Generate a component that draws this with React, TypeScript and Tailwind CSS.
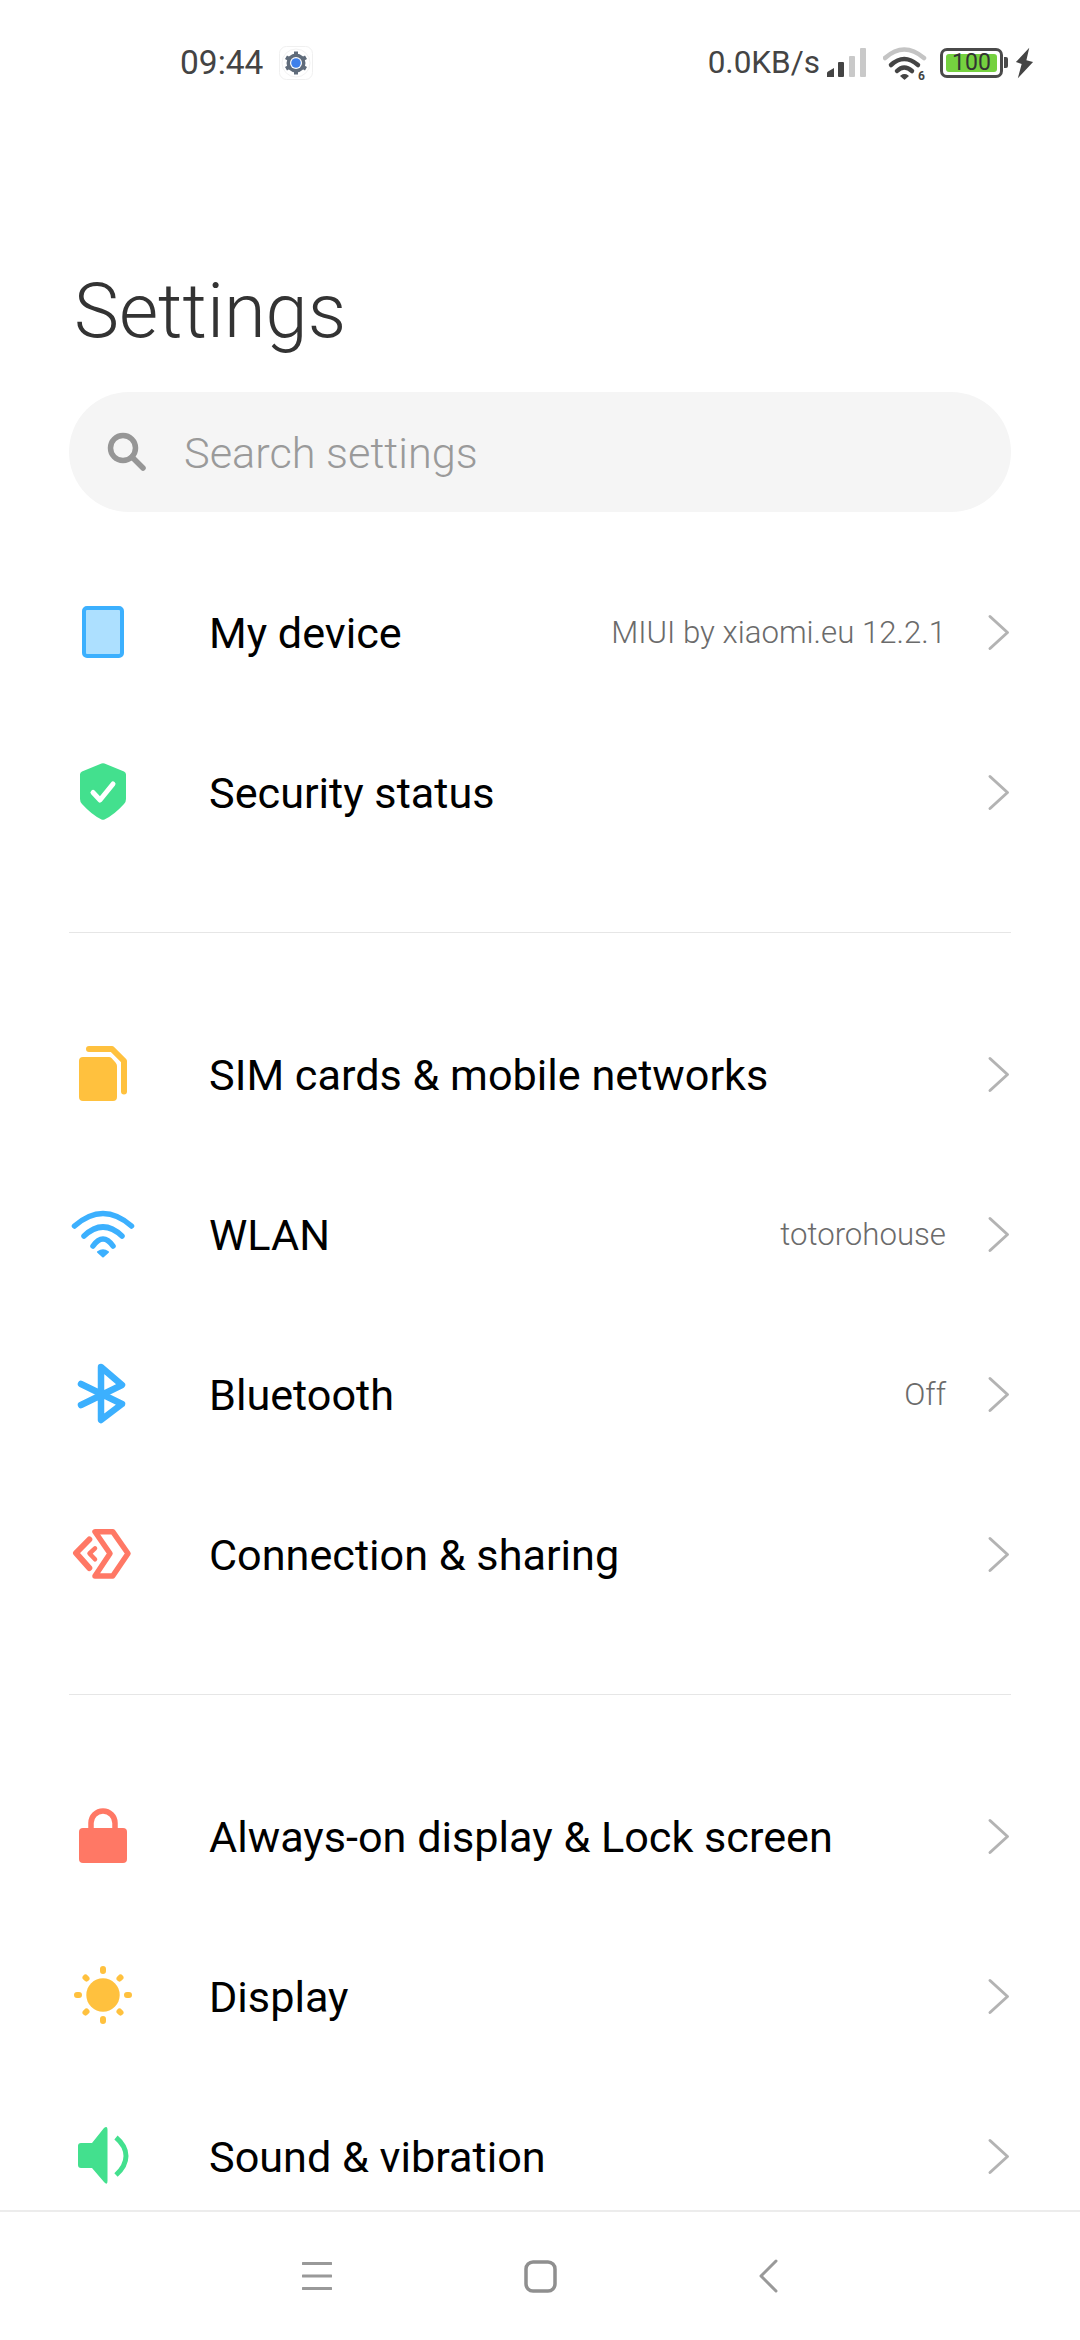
import React from 'react';

const font = { fontFamily: 'Roboto, sans-serif' };

const DeviceIcon = () => (
  <svg width="70" height="70" viewBox="0 0 70 70">
    <rect x="16" y="10" width="38" height="48" rx="3" fill="#ade0ff" stroke="#3cb0fe" strokeWidth="4" />
  </svg>
);

const ShieldIcon = () => (
  <svg width="70" height="70" viewBox="0 0 70 70">
    <path d="M33.5 5.6 Q35 5 36.5 5.6 L56 13.5 Q58 14.3 58 16.5 V41 Q58 44 56 46 Q46 57 36.5 61.5 Q35 62.2 33.5 61.5 Q24 57 14 46 Q12 44 12 41 V16.5 Q12 14.3 14 13.5 Z" fill="#43e08e" />
    <path d="M25 34.5 L32 42 L45 26" fill="none" stroke="#fff" strokeWidth="5" strokeLinecap="round" strokeLinejoin="round" />
  </svg>
);

const SimIcon = () => (
  <svg width="70" height="70" viewBox="0 0 70 70">
    <path d="M15 17 H41 Q42.5 17 43.5 18 L47.5 22.5 Q49 24 49 26 V57 Q49 61 45 61 H15 Q11 61 11 57 V21 Q11 17 15 17 Z" fill="#ffc13e" />
    <path d="M21 9 H44 L56 21 V51.5" fill="none" stroke="#ffc13e" strokeWidth="6" strokeLinecap="round" strokeLinejoin="round" />
  </svg>
);

const WlanIcon = () => (
  <svg width="70" height="70" viewBox="0 0 70 70" fill="none" stroke="#3cb0fe" strokeLinecap="round">
    <path d="M6.5 26 Q35 1 63.5 26" strokeWidth="5.5" />
    <path d="M16 36 Q35 18 54 36" strokeWidth="5.5" />
    <path d="M25 46 Q35 32 45 46" strokeWidth="5.5" />
    <path d="M30 52 Q35 48.5 40 52 L35 56.5 Z" fill="#3cb0fe" strokeWidth="2" strokeLinejoin="round" />
  </svg>
);

const BluetoothIcon = () => (
  <svg width="70" height="70" viewBox="0 0 70 70">
    <path d="M13 24 L54 44 L33 60 V7 L54 25 L13 45" fill="none" stroke="#3cb0fe" strokeWidth="6.5" strokeLinecap="round" strokeLinejoin="round" />
  </svg>
);

const ConnectionIcon = () => (
  <svg width="70" height="70" viewBox="0 0 70 70" fill="none" stroke="#ff7865" strokeLinejoin="round" strokeLinecap="round">
    <path d="M27 11.7 H44.7 L60 33.5 L44.7 56 H27 L42 33.5 Z" strokeWidth="5.5" />
    <path d="M21.3 19.5 L8 33 L21.3 48" strokeWidth="6" />
    <path d="M27 28.3 L21.5 33.5 L27 39.3" strokeWidth="4.5" />
  </svg>
);

const LockIcon = () => (
  <svg width="70" height="70" viewBox="0 0 70 70">
    <path d="M23 28 V21 a12 12 0 0 1 24 0 V28" fill="none" stroke="#ff7865" strokeWidth="5.5" />
    <rect x="11" y="26" width="48" height="35" rx="4" fill="#ff7865" />
  </svg>
);

const SunIcon = () => (
  <svg width="70" height="70" viewBox="0 0 70 70" stroke="#ffc13e" strokeWidth="6" strokeLinecap="round">
    <circle cx="35" cy="33" r="16.7" fill="#ffc13e" stroke="none" />
    <path d="M35 7 V9 M35 57 V59 M9 33 H11 M59 33 H61 M17.5 15.5 L18.5 16.5 M51.5 49.5 L52.5 50.5 M52.5 15.5 L51.5 16.5 M18.5 49.5 L17.5 50.5" />
  </svg>
);

const SoundIcon = () => (
  <svg width="70" height="70" viewBox="0 0 70 70">
    <path d="M13 21 H24 L36 6 Q39.5 3 39.5 8 V59 Q39.5 64 36 60 L24 46 H13 Q10 46 10 43 V24 Q10 21 13 21 Z" fill="#43e08e" />
    <path d="M48 15.5 Q58 24 58 34 Q58 44 48 53" fill="none" stroke="#43e08e" strokeWidth="5" />
  </svg>
);

const Chevron = () => (
  <svg width="24" height="38" viewBox="0 0 24 38" className="shrink-0">
    <path d="M3 2.5 L20.5 18.5 L3 34.5" fill="none" stroke="#b3b3b3" strokeWidth="3" strokeLinecap="round" strokeLinejoin="round" />
  </svg>
);

const Row = ({ icon, label, value }: { icon: React.ReactNode; label: string; value?: string }) => (
  <div className="flex h-[160px] items-center pl-[68px] pr-[69px]">
    <div className="h-[70px] w-[70px] shrink-0">{icon}</div>
    <span className="ml-[71px] flex-1 pt-[2px] text-[43.2px] leading-none text-black">{label}</span>
    {value && <span className="mr-[41px] text-[31.2px] font-light leading-none text-[#6b6b6b]">{value}</span>}
    <Chevron />
  </div>
);

const Divider = () => <div className="mx-[69px] h-[1px] bg-[#e6e6e6]" />;

const StatusBar = () => (
  <div className="flex h-[125px] items-center pl-[180px] pr-[46px] text-[#444]">
    <span className="text-[33.5px] leading-none">09:44</span>
    <svg width="34" height="34" viewBox="0 0 34 34" className="ml-[16px]">
      <rect x="0.5" y="0.5" width="33" height="33" rx="7" fill="#fff" stroke="#f0f0f0" />
      <circle cx="17" cy="17" r="14" fill="#fff" stroke="#f2f2f2" />
      <circle cx="17" cy="17" r="9.5" fill="#5f6b7a" />
      <path d="M17 5.5 V28.5 M7 11.25 L27 22.75 M27 11.25 L7 22.75" stroke="#5f6b7a" strokeWidth="4" />
      <circle cx="17" cy="17" r="6" fill="#fff" />
      <circle cx="17" cy="17" r="4.8" fill="#3f80ea" />
    </svg>
    <span className="ml-auto text-[31.5px] leading-none">0.0KB/s</span>
    <svg width="40" height="30" viewBox="0 0 40 30" className="ml-[7px] shrink-0">
      <path d="M0 29 V25 Q0 24 1 23.5 L7 20 V29 Z" fill="#444" />
      <rect x="11" y="14" width="6" height="15" rx="1" fill="#444" />
      <rect x="22" y="8" width="6" height="21" rx="1" fill="#c9c9c9" />
      <rect x="33" y="0" width="6" height="29" rx="1" fill="#c9c9c9" />
    </svg>
    <svg width="46" height="44" viewBox="0 -4 46 44" className="ml-[16px] shrink-0" fill="none" strokeLinecap="round">
      <path d="M2 13 Q21 -4 41 13" stroke="#c4c4c4" strokeWidth="4.5" />
      <path d="M8 20 Q21 8 35 20" stroke="#444" strokeWidth="4.5" />
      <path d="M14 26 Q21 19 29 26" stroke="#444" strokeWidth="4.5" />
      <path d="M18 31 Q21.5 28.5 25 31 L21.5 34 Z" fill="#444" stroke="#444" strokeWidth="1.5" strokeLinejoin="round" />
      <text x="35" y="35" fontSize="12" fontWeight="700" fill="#444" stroke="none" fontFamily="Roboto, sans-serif">6</text>
    </svg>
    <div className="ml-[11px] flex h-[30px] w-[63px] shrink-0 items-center justify-center rounded-[7px] border-[3.5px] border-[#4a4a4a] p-[3px]">
      <div className="flex h-full w-full items-center justify-center rounded-[3px] bg-[#75d13f] text-[23px] leading-none text-[#333]">100</div>
    </div>
    <div className="ml-[1px] h-[11px] w-[4px] shrink-0 rounded-r-[2px] bg-[#4a4a4a]" />
    <svg width="19" height="32" viewBox="0 0 20 32" className="ml-[7px] shrink-0">
      <path d="M15 0 L1 15 L7 17 L3 32 L19 15 L12 13 L15 0 Z" fill="#444" />
    </svg>
  </div>
);

const NavBar = () => (
  <div className="flex h-[130px] shrink-0 items-center border-t-[2px] border-[#ececec] bg-white pl-[302px]">
    <svg width="30" height="30" viewBox="0 0 30 30">
      <path d="M1 2.5 H29 M1 15 H29 M1 27.5 H29" stroke="#999" strokeWidth="3" strokeLinecap="round" />
    </svg>
    <svg width="33" height="33" viewBox="0 0 33 33" className="ml-[192px]">
      <rect x="2" y="2" width="29" height="29" rx="7" fill="none" stroke="#8f8f8f" strokeWidth="3.5" />
    </svg>
    <svg width="19" height="34" viewBox="0 0 19 34" className="ml-[202px]">
      <path d="M17 2 L2 17 L17 32" fill="none" stroke="#999" strokeWidth="3" strokeLinecap="round" strokeLinejoin="round" />
    </svg>
  </div>
);

export default function App() {
  return (
    <div className="flex h-[2340px] w-[1080px] flex-col overflow-hidden bg-white" style={font}>
      <StatusBar />
      <div className="min-h-0 flex-1 overflow-hidden">
        <h1 className="mt-[143px] pl-[74px] text-[75.8px] font-light leading-[88px] text-[#333]">Settings</h1>
        <div className="mx-[69px] mt-[36px] flex h-[120px] items-center rounded-[60px] bg-[#f5f5f5] pl-[38px]">
          <svg width="40" height="40" viewBox="0 0 40 40">
            <circle cx="16" cy="16" r="12.5" fill="none" stroke="#969696" strokeWidth="5.5" />
            <path d="M25 25 L36 36" stroke="#969696" strokeWidth="5.5" strokeLinecap="round" />
          </svg>
          <span className="ml-[37px] pt-[3px] text-[43.3px] font-light leading-none text-[#9a9a9a]">Search settings</span>
        </div>

        <div className="mt-[41px]">
          <Row icon={<DeviceIcon />} label="My device" value="MIUI by xiaomi.eu 12.2.1" />
          <Row icon={<ShieldIcon />} label="Security status" />
        </div>
        <div className="mb-[62px] mt-[59px]"><Divider /></div>
        <Row icon={<SimIcon />} label="SIM cards &amp; mobile networks" />
        <Row icon={<WlanIcon />} label="WLAN" value="totorohouse" />
        <Row icon={<BluetoothIcon />} label="Bluetooth" value="Off" />
        <Row icon={<ConnectionIcon />} label="Connection &amp; sharing" />
        <div className="mb-[62px] mt-[59px]"><Divider /></div>
        <Row icon={<LockIcon />} label="Always-on display &amp; Lock screen" />
        <Row icon={<SunIcon />} label="Display" />
        <Row icon={<SoundIcon />} label="Sound &amp; vibration" />
      </div>
      <NavBar />
    </div>
  );
}
